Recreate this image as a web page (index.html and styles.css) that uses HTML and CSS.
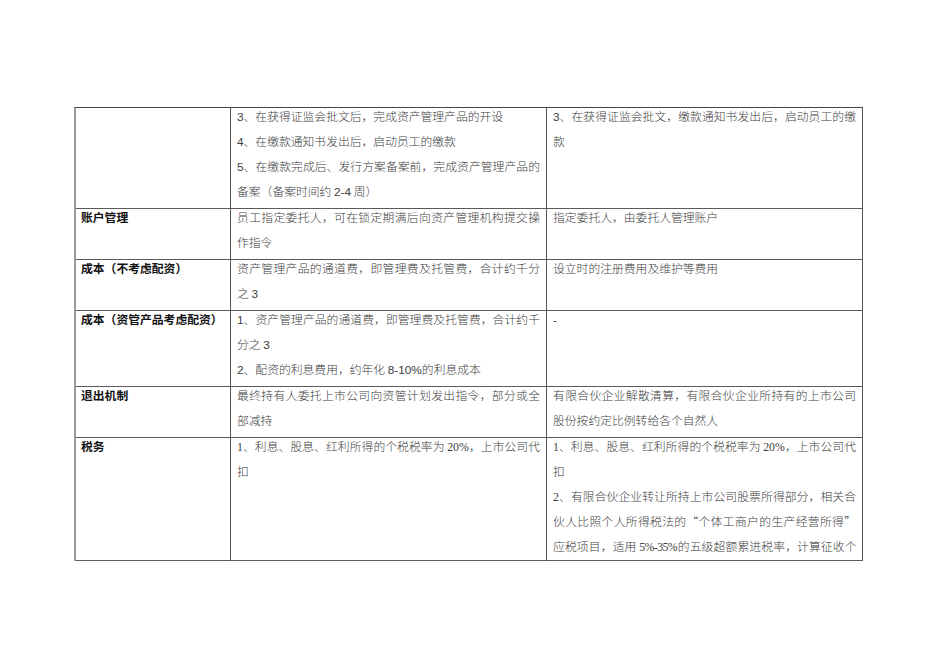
FILE: index.html
```html
<!DOCTYPE html>
<html lang="zh-CN">
<head>
<meta charset="utf-8">
<link rel="stylesheet" href="styles.css">
<title>对比表</title>
</head>
<body>
<div class="sheet">
  <div class="cell label"></div>
  <div class="cell">
    <div class="ln"><span class="d">3</span>、在获得证监会批文后，完成资产管理产品的开设</div>
    <div class="ln"><span class="d">4</span>、在缴款通知书发出后，启动员工的缴款</div>
    <div class="ln full"><span class="d">5</span>、在缴款完成后、发行方案备案前，完成资产管理产品的</div>
    <div class="ln">备案（备案时间约 <span class="d">2-4</span> 周）</div>
  </div>
  <div class="cell">
    <div class="ln full"><span class="d">3</span>、在获得证监会批文，缴款通知书发出后，启动员工的缴</div>
    <div class="ln">款</div>
  </div>

  <div class="cell label"><div class="ln">账户管理</div></div>
  <div class="cell">
    <div class="ln full">员工指定委托人，可在锁定期满后向资产管理机构提交操</div>
    <div class="ln">作指令</div>
  </div>
  <div class="cell">
    <div class="ln">指定委托人，由委托人管理账户</div>
  </div>

  <div class="cell label"><div class="ln">成本（不考虑配资）</div></div>
  <div class="cell">
    <div class="ln full">资产管理产品的通道费，即管理费及托管费，合计约千分</div>
    <div class="ln">之 <span class="d">3</span></div>
  </div>
  <div class="cell">
    <div class="ln">设立时的注册费用及维护等费用</div>
  </div>

  <div class="cell label"><div class="ln">成本（资管产品考虑配资）</div></div>
  <div class="cell">
    <div class="ln full"><span class="d">1</span>、资产管理产品的通道费，即管理费及托管费，合计约千</div>
    <div class="ln">分之 <span class="d">3</span></div>
    <div class="ln"><span class="d">2</span>、配资的利息费用，约年化 <span class="d">8-10%</span>的利息成本</div>
  </div>
  <div class="cell">
    <div class="ln"><span class="d">-</span></div>
  </div>

  <div class="cell label"><div class="ln">退出机制</div></div>
  <div class="cell">
    <div class="ln full">最终持有人委托上市公司向资管计划发出指令，部分或全</div>
    <div class="ln">部减持</div>
  </div>
  <div class="cell">
    <div class="ln full">有限合伙企业解散清算，有限合伙企业所持有的上市公司</div>
    <div class="ln">股份按约定比例转给各个自然人</div>
  </div>

  <div class="cell label clip"><div class="ln">税务</div></div>
  <div class="cell clip">
    <div class="ln full"><span class="s">1</span>、利息、股息、红利所得的个税税率为 <span class="s">20%</span>，上市公司代</div>
    <div class="ln">扣</div>
  </div>
  <div class="cell clip">
    <div class="ln full"><span class="s">1</span>、利息、股息、红利所得的个税税率为 <span class="s">20%</span>，上市公司代</div>
    <div class="ln">扣</div>
    <div class="ln full"><span class="s">2</span>、有限合伙企业转让所持上市公司股票所得部分，相关合</div>
    <div class="ln full">伙人比照个人所得税法的<span class="q">“</span>个体工商户的生产经营所得<span class="q">”</span></div>
    <div class="ln full tight">应税项目，适用 <span class="s">5%-35%</span>的五级超额累进税率，计算征收个</div>
  </div>
</div>
</body>
</html>
```

FILE: styles.css
```css
html, body {
  margin: 0;
  padding: 0;
  background: #ffffff;
}

body {
  font-family: "Noto Sans CJK SC", sans-serif;
  font-size: 11.8px;
  color: #404040;
}

.sheet {
  display: grid;
  grid-template-columns: 155px 316px 316px;
  width: 789px;
  box-sizing: border-box;
  margin: 107px 0 0 74px;
  border-top: 1px solid #444444;
  border-left: 2px solid #9a9a9a;
}

.cell {
  box-sizing: border-box;
  border-right: 1px solid #555555;
  border-bottom: 1px solid #5a5a5a;
  padding: 0 6px 0 6px;
  font-weight: 300;
}

.cell.label {
  padding-left: 5px;
  font-weight: 700;
  color: #111111;
}

.cell.clip {
  height: 123px;
  overflow: hidden;
}

.ln {
  line-height: 16px;
  height: 25px;
  box-sizing: border-box;
  padding-bottom: 9px;
  white-space: nowrap;
}

.ln.full {
  text-align: justify;
  text-align-last: justify;
  text-justify: inter-character;
  white-space: normal;
}

.ln.tight {
  letter-spacing: -0.6px;
}

.d {
  font-family: "Liberation Sans", sans-serif;
  font-weight: 400;
}

.s {
  font-family: "Liberation Serif", serif;
  font-weight: 400;
}

.q {
  font-family: "Noto Sans CJK SC", sans-serif;
}
```
